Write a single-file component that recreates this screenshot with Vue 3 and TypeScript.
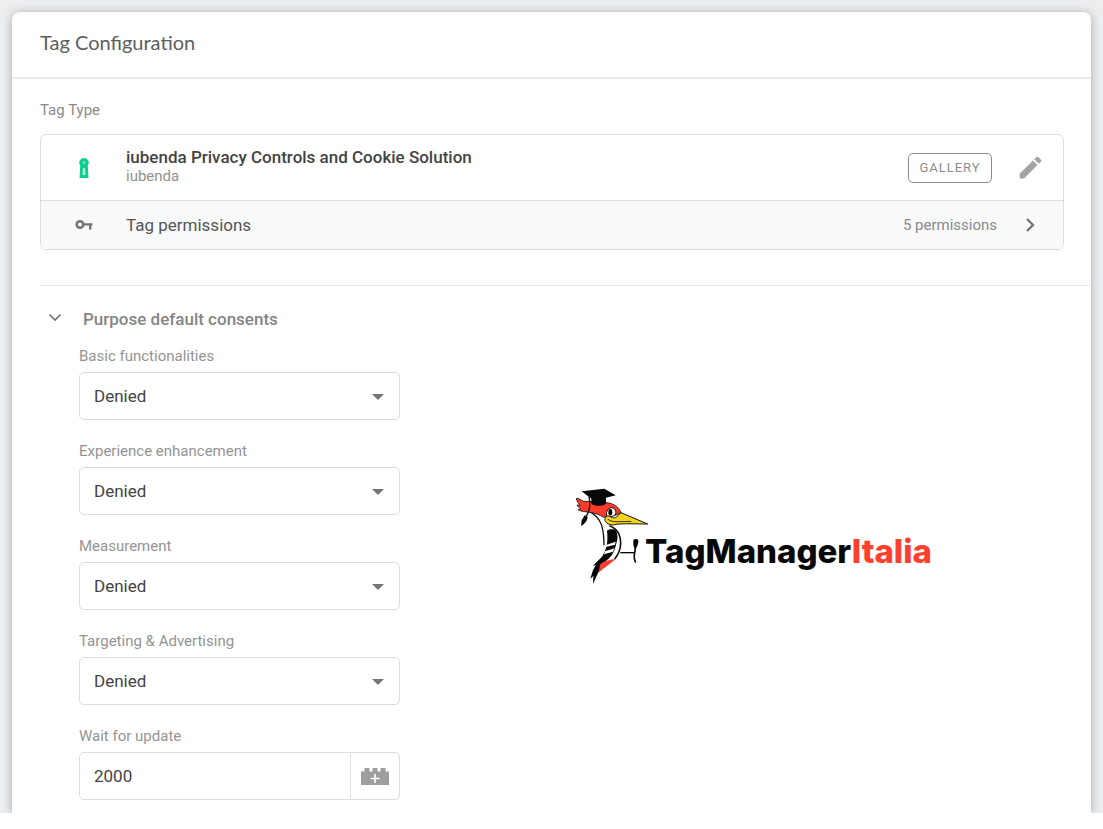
<script setup lang="ts">
import { ref } from 'vue'

interface ConsentField {
  id: string
  label: string
  value: string
}

const consents = ref<ConsentField[]>([
  { id: 'basic', label: 'Basic functionalities', value: 'Denied' },
  { id: 'experience', label: 'Experience enhancement', value: 'Denied' },
  { id: 'measurement', label: 'Measurement', value: 'Denied' },
  { id: 'targeting', label: 'Targeting & Advertising', value: 'Denied' },
])
const waitForUpdate = ref('2000')
const open = ref(true)
</script>

<template>
  <div class="backdrop">
    <main class="card">
      <header class="card-header">
        <h1>Tag Configuration</h1>
      </header>

      <section class="tag-type">
        <h2>Tag Type</h2>
        <div class="type-box">
          <div class="type-row">
            <svg class="lead-icon" width="12" height="22" viewBox="0 0 12 22" aria-hidden="true">
              <path fill="#0fce8e" d="M6 1a4.6 4.6 0 0 1 3.8 7.500L10.500 21h-9L2.200 8.500A4.600 4.600 0 0 1 6 1z" />
              <circle cx="6" cy="5.500" r="1.300" fill="#8eeacb" />
              <path fill="#b5f2de" d="M5 11h2l.5 7h-3z" />
            </svg>
            <div class="type-text">
              <strong>iubenda Privacy Controls and Cookie Solution</strong>
              <span>iubenda</span>
            </div>
            <button class="gallery" type="button">GALLERY</button>
            <button class="icon-button" type="button" aria-label="Edit tag type">
              <svg width="29" height="29" viewBox="0 0 24 24" aria-hidden="true">
                <path fill="#a3a3a3" d="M3 17.250V21h3.750L17.810 9.940l-3.750-3.750L3 17.250zM20.710 7.040a1 1 0 0 0 0-1.410l-2.340-2.340a1 1 0 0 0-1.410 0l-1.830 1.830 3.750 3.750 1.830-1.830z" />
              </svg>
            </button>
          </div>
          <button class="permission-row" type="button">
            <svg class="lead-icon" width="18" height="12" viewBox="0 0 18 12" aria-hidden="true">
              <circle cx="5" cy="5.500" r="3.300" fill="none" stroke="#757575" stroke-width="2.600" />
              <path fill="none" stroke="#757575" stroke-width="2.400" d="M8.500 5.400h9M15.200 5.400v5.200" />
            </svg>
            <span class="permission-name">Tag permissions</span>
            <span class="permission-count">5 permissions</span>
            <svg class="chevron" width="30" height="16" viewBox="0 0 30 16" aria-hidden="true">
              <path fill="none" stroke="#757575" stroke-width="2.400" d="M12 2l6 6-6 6" />
            </svg>
          </button>
        </div>
      </section>

      <section class="consents">
        <button class="group-toggle" type="button" :aria-expanded="open" @click="open = !open">
          <svg width="14" height="12" viewBox="0 0 14 12" aria-hidden="true">
            <path fill="none" stroke="#757575" stroke-width="1.700" d="M1.500 1.500L7 7l5.500-5.500" />
          </svg>
          <span>Purpose default consents</span>
        </button>

        <div v-show="open" class="group-body">
          <form class="fields" @submit.prevent>
            <div v-for="field in consents" :key="field.id" class="field">
              <label :for="field.id">{{ field.label }}</label>
              <div class="select-wrap">
                <select :id="field.id" v-model="field.value">
                  <option>Denied</option>
                  <option>Granted</option>
                </select>
                <svg width="12" height="6" viewBox="0 0 12 6" aria-hidden="true">
                  <path fill="#757575" d="M0 0h12L6 6z" />
                </svg>
              </div>
            </div>
            <div class="field">
              <label for="wait">Wait for update</label>
              <div class="input-wrap">
                <input id="wait" v-model="waitForUpdate" type="text" />
                <button type="button" aria-label="Insert variable">
                  <svg width="28" height="17" viewBox="0 0 28 17" aria-hidden="true">
                    <path fill="#9e9e9e" d="M0 3.500h3.500V0h5v3.500h3V0h5v3.500h3V0h5v3.500H28V17H0z" />
                    <path stroke="#fff" stroke-width="1.600" d="M14 6v9M9.500 10.500h9" />
                  </svg>
                </button>
              </div>
            </div>
          </form>

          <div class="brand">
            <svg class="bird" width="70" height="99" viewBox="48 18 210 297" aria-hidden="true">
              <path fill="#fff" d="M84 90c20 12 34 24 42 42 6 14 8 36 8 52l-10 62 36-8c14-10 26-28 26-48 0-18-8-38-28-50l-18-48z" />
              <path fill="none" stroke="#111" stroke-width="4" d="M80 88c22 10 41 26 48 48 6 20 7 38 7 60" />
              <path fill="#fb3b2c" stroke="#111" stroke-width="2.500" stroke-linejoin="round" d="M54 54l20 10 34 1 36 3c18 2 36 12 42 30l-18 8-34 6c-12-8-26-13-42-15-14-2-24-2-35-8l8-3c-6-4-9-7-11-11l10 1c-5-5-9-11-12-19z" />
              <path fill="#fff" stroke="#111" stroke-width="3" d="M144 110c-4-12 0-23 12-27 12 0 18 12 12 22-6 5-14 5-24 5z" />
              <ellipse cx="154" cy="97" rx="6" ry="10" fill="#080808" />
              <path fill="#f2d31d" stroke="#111" stroke-width="3" stroke-linejoin="round" d="M186 98l80 34c-40 0-68-2-94 1-14 5-30 0-34-12-2-8 5-15 12-13 8 4 14 8 22 3z" />
              <path fill="none" stroke="#111" stroke-width="2.500" d="M146 117c14 14 46 5 71 8" />
              <path fill="#080808" d="M68 34l68-8 34 20-29 7v18c-10 8-34 8-44 0V56z" />
              <path fill="none" stroke="#111" stroke-width="4" d="M90 50c5 24 3 46-12 64" />
              <path fill="#080808" d="M77 106l9 5c-1 13-11 22-20 27l2-17z" />
              <path fill="#080808" d="M144 152c8-6 22-5 28 0 4 12 5 24 1 34-5 24-12 40-24 50-12 8-22 18-26 30l-21 46 1-24-9 8 7-23 9-18-9 3 28-28c14-22 19-44 15-78z" />
              <path fill="none" stroke="#111" stroke-width="5" d="M151 137c24 8 34 29 34 54-1 20-10 36-18 46" />
              <path fill="#fff" d="M143 194l27-9-2 9-28 7zM138 214l28-9-4 10-27 8zM139 150l5 30-4 8z" />
              <path fill="#fb3b2c" d="M170 237c-12 12-35 26-52 42l6-26c12-12 30-14 46-16z" />
              <path fill="none" stroke="#080808" stroke-width="4" d="M184 218h43" />
              <path fill="none" stroke="#080808" stroke-width="5" stroke-linecap="round" d="M227 182c-4 12 4 18 1 32-3 10-4 20 1 32M235 182c2 8-3 16-6 22" />
              <path fill="#080808" d="M223 180c6-5 15-3 15 4l-6 14-8 2z" />
            </svg>
            <p>TagManager<span>Italia</span></p>
          </div>
        </div>
      </section>
    </main>
  </div>
</template>

<style>
body {
  margin: 0;
  background: #fff;
}
</style>

<style scoped>
.backdrop {
  padding: 12px 12px 0;
  overflow: hidden;
  background: #eceef0;
  font-family: Roboto, "Liberation Sans", sans-serif;
  color: #444;
}

.backdrop *,
.backdrop {
  box-sizing: border-box;
}

button,
input,
select {
  margin: 0;
  padding: 0;
  border: 0;
  background: none;
  font-family: inherit;
  color: inherit;
}

svg {
  display: block;
  flex: none;
}

.card {
  border-radius: 8px 8px 0 0;
  background: #fff;
  box-shadow: 0 1px 10px rgba(60, 64, 67, 0.4);
}

.card-header {
  display: flex;
  align-items: center;
  height: 67px;
  padding: 0 28px 6px;
  border-bottom: 2px solid #e8eaed;
}

h1 {
  margin: 0;
  font: 400 20px/24px Lato, sans-serif;
  color: #5c5e60;
}

.tag-type {
  padding: 21px 27px 0 28px;
}

h2 {
  margin: 0 0 14px;
  font-size: 15px;
  font-weight: 400;
  line-height: 20px;
  color: #8a8a8a;
}

.type-box {
  border: 1px solid #dcdde1;
  border-radius: 6px;
  overflow: hidden;
}

.type-row,
.permission-row {
  display: grid;
  grid-template-columns: 85px 1fr auto 66px;
  align-items: center;
  width: 100%;
}

.type-row {
  height: 65px;
}

.permission-row {
  height: 49px;
  padding-bottom: 1px;
  border-top: 1px solid #dcdde0;
  background: #f8f9fb;
  text-align: left;
}

.lead-icon,
.chevron,
.icon-button {
  justify-self: center;
}

.type-text {
  display: flex;
  flex-direction: column;
  padding-bottom: 4px;
}

.type-text strong {
  font-size: 17px;
  font-weight: 500;
  line-height: 20px;
}

.type-text span {
  font-size: 15px;
  line-height: 18px;
  color: #929292;
}

.gallery {
  height: 30px;
  width: 84px;
  margin-right: 5px;
  border: 1px solid #8a8a8a;
  border-radius: 5px;
  font-size: 13px;
  letter-spacing: 1px;
  color: #8c8c8c;
}

.permission-name {
  font-size: 17px;
  color: #555;
}

.permission-count {
  font-size: 15px;
  color: #8a8a8a;
}

.consents {
  margin: 35px 0 0 28px;
  padding-bottom: 13px;
  border-top: 1px solid #e8eaed;
}

.group-toggle {
  display: flex;
  align-items: center;
  gap: 21px;
  height: 24px;
  margin: 21px 0 17px 8px;
  font-size: 17px;
  font-weight: 500;
  line-height: 24px;
  color: #858585;
}

.group-body {
  display: flex;
  align-items: flex-start;
}

.fields {
  display: grid;
  gap: 23px;
  width: 321px;
  margin-left: 39px;
}

.field label {
  display: block;
  height: 24px;
  font-size: 15px;
  line-height: 16px;
  color: #949494;
}

.select-wrap {
  position: relative;
}

.select-wrap select {
  display: block;
  width: 100%;
  height: 48px;
  padding: 0 14px;
  border: 1px solid #dcdde1;
  border-radius: 5px;
  appearance: none;
  font-size: 17px;
  color: #444;
}

.select-wrap svg {
  position: absolute;
  top: 22px;
  right: 16px;
  pointer-events: none;
}

.input-wrap {
  display: flex;
  height: 48px;
  border: 1px solid #dcdde1;
  border-radius: 5px;
}

.input-wrap input {
  flex: 1;
  min-width: 0;
  padding: 0 14px;
  font-size: 17px;
  color: #444;
}

.input-wrap button {
  display: grid;
  place-items: center;
  width: 49px;
  border-left: 1px solid #dcdde1;
}

.brand {
  display: flex;
  flex: 1;
  justify-content: center;
  margin-top: 138px;
  padding-left: 16px;
}

.bird {
  overflow: visible;
}

.brand p {
  margin: 45px 0 0;
  font: 800 33px/40px Inter, sans-serif;
  color: #080808;
}

.brand span {
  color: #ff402d;
}
</style>
